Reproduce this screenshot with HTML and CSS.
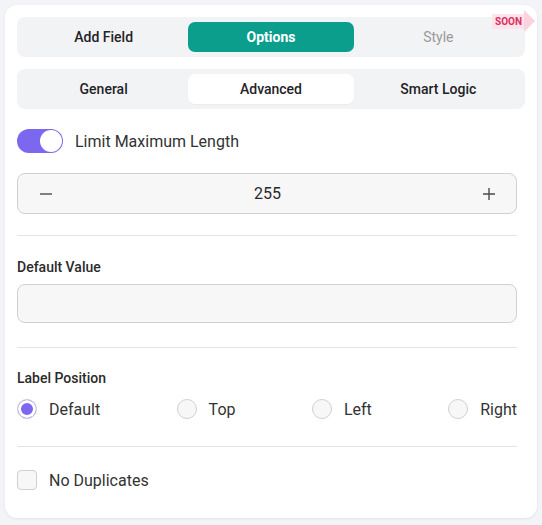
FILE: index.html
```html
<!DOCTYPE html>
<html>
<head>
<meta charset="utf-8">
<link rel="stylesheet" href="styles.css">
</head>
<body>
<div class="card">
  <div class="tabs main-tabs">
    <div class="tab">Add Field</div>
    <div class="tab active-teal">Options</div>
    <div class="tab disabled">Style</div>
    <span class="soon">SOON</span>
  </div>
  <div class="tabs sub-tabs">
    <div class="tab">General</div>
    <div class="tab active-white">Advanced</div>
    <div class="tab">Smart Logic</div>
  </div>
  <div class="content">
    <div class="toggle-row">
      <span class="toggle"><span class="knob"></span></span>
      <span class="toggle-label">Limit Maximum Length</span>
    </div>
    <div class="stepper">
      <svg class="step-icon" width="14" height="14" viewBox="0 0 14 14"><path d="M1 7H13" stroke="#4b4b4b" stroke-width="1.4"/></svg>
      <span class="step-value">255</span>
      <svg class="step-icon" width="14" height="14" viewBox="0 0 14 14"><path d="M1 7H13M7 1V13" stroke="#4b4b4b" stroke-width="1.4"/></svg>
    </div>
    <div class="divider d1"></div>
    <div class="field-label l1">Default Value</div>
    <div class="text-input"></div>
    <div class="divider d2"></div>
    <div class="field-label l2">Label Position</div>
    <div class="radio-row">
      <label class="radio-item"><span class="radio checked"></span>Default</label>
      <label class="radio-item"><span class="radio"></span>Top</label>
      <label class="radio-item"><span class="radio"></span>Left</label>
      <label class="radio-item"><span class="radio"></span>Right</label>
    </div>
    <div class="divider d3"></div>
    <label class="check-row"><span class="checkbox"></span>No Duplicates</label>
  </div>
</div>
</body>
</html>
```
FILE: styles.css
```css
* { box-sizing: border-box; }
html, body {
  margin: 0;
  padding: 0;
}
body {
  background: #f3f4f7;
  font-family: Roboto, "Noto Sans", "Liberation Sans", sans-serif;
  color: #333;
  width: 542px;
  height: 525px;
  overflow: hidden;
}
.card {
  margin: 5px;
  width: 532px;
  height: 513px;
  background: #fff;
  border-radius: 12px;
  box-shadow: 0 1px 3px rgba(0,0,0,0.07);
  padding: 12px;
}
.tabs {
  position: relative;
  display: grid;
  grid-template-columns: 1fr 1fr 1fr;
  gap: 2px;
  padding: 5px 4px;
  height: 40px;
  background: #f2f3f5;
  border-radius: 8px;
}
.sub-tabs { margin-top: 12px; }
.tab {
  display: flex;
  align-items: center;
  justify-content: center;
  border-radius: 7px;
  font-size: 14px;
  font-weight: 500;
  color: #1f2328;
}
.active-teal {
  background: #0b9e8d;
  color: #fff;
  font-weight: 700;
}
.active-white {
  background: #fff;
  box-shadow: 0 1px 2px rgba(0,0,0,0.04);
}
.disabled { color: #9a9a9a; font-weight: 400; }
.soon {
  position: absolute;
  left: 475px;
  top: -3px;
  height: 15px;
  padding: 0 2px 0 3px;
  background: #fde3eb;
  color: #d8315f;
  font-size: 10px;
  font-weight: 700;
  line-height: 15px;
}
.soon::after {
  content: "";
  position: absolute;
  left: 100%;
  top: -4px;
  border-left: 11px solid #fcd2de;
  border-top: 11px solid transparent;
  border-bottom: 11px solid transparent;
}
.content {
  padding-right: 8px;
}
.toggle-row {
  margin-top: 20px;
  display: flex;
  align-items: center;
  gap: 12px;
  height: 24px;
}
.toggle {
  width: 46px;
  height: 24px;
  border-radius: 12px;
  background: #7b68ee;
  display: flex;
  align-items: center;
  justify-content: flex-end;
  padding-right: 1px;
}
.knob {
  width: 22px;
  height: 22px;
  border-radius: 50%;
  background: #fff;
}
.toggle-label {
  font-size: 16px;
  color: #333;
}
.stepper {
  margin-top: 20px;
  height: 41px;
  border: 1px solid #cfd0d4;
  border-radius: 8px;
  background: #f7f7f8;
  display: flex;
  align-items: center;
  justify-content: space-between;
  padding: 0 20px 0 21px;
}
.step-value {
  font-size: 16px;
  color: #2a2a2a;
}
.divider {
  height: 1px;
  background: #e3e4e7;
}
.d1 { margin-top: 21px; }
.field-label {
  font-size: 14px;
  font-weight: 500;
  line-height: 16px;
  color: #2a2a2a;
}
.l1 { margin-top: 23px; }
.text-input {
  margin-top: 9px;
  height: 39px;
  border: 1px solid #cfd0d4;
  border-radius: 8px;
  background: #f7f7f8;
}
.d2 { margin-top: 24px; }
.l2 { margin-top: 22px; }
.radio-row {
  margin-top: 13px;
  display: flex;
  justify-content: space-between;
  height: 20px;
}
.radio-item, .check-row {
  display: flex;
  align-items: center;
  gap: 12px;
  font-size: 16px;
  color: #333;
}
.radio {
  width: 20px;
  height: 20px;
  border-radius: 50%;
  border: 1px solid #cfd0d4;
  background: #f7f7f8;
}
.radio.checked {
  background: #7b68ee;
  box-shadow: inset 0 0 0 3px #fff;
}
.d3 { margin-top: 27px; }
.check-row {
  margin-top: 23px;
  height: 20px;
}
.checkbox {
  width: 20px;
  height: 20px;
  border-radius: 4px;
  border: 1px solid #cfd0d4;
  background: #f7f7f8;
}
```
